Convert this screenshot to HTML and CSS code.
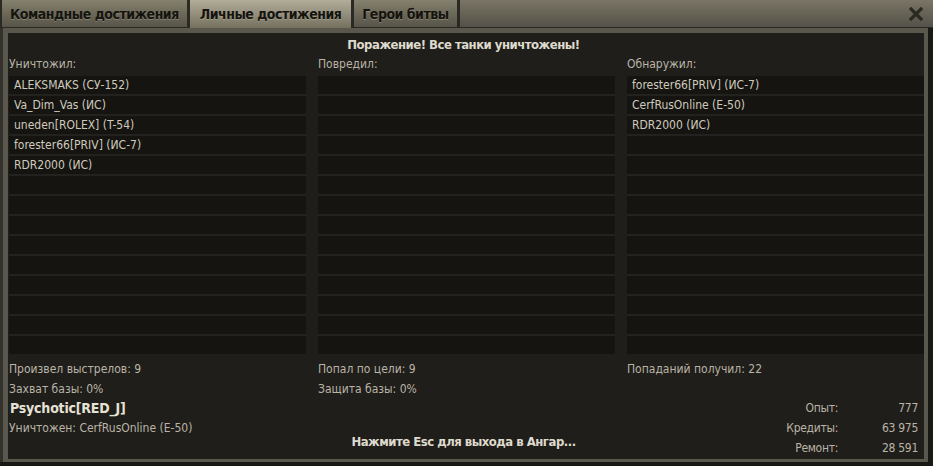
FILE: index.html
```html
<!DOCTYPE html>
<html>

<head>
  <title>Итоги боя</title>
  <link rel="stylesheet" href="styles.css">
</head>

<body>
  <div class="window">
    <div class="tab-bar">
      <div class="tab">Командные достижения</div>
      <div class="tab active">Личные достижения</div>
      <div class="tab">Герои битвы</div>
      <div class="tab-fill">
        <button type="button" class="close" title="Закрыть">
          <svg width="14" height="14" viewBox="0 0 14 14">
            <path d="M2 2 L12 12 M12 2 L2 12" stroke="#2a2924" stroke-width="3.2" stroke-linecap="square" />
          </svg>
        </button>
      </div>
    </div>

    <div class="frame">
      <div class="panel">
        <h1 class="result">Поражение! Все танки уничтожены!</h1>

        <div class="columns">
          <div class="column">
            <div class="column-title">Уничтожил:</div>
            <ul class="list">
              <li>ALEKSMAKS (СУ-152)</li>
              <li>Va_Dim_Vas (ИС)</li>
              <li>uneden[ROLEX] (T-54)</li>
              <li>forester66[PRIV] (ИС-7)</li>
              <li>RDR2000 (ИС)</li>
              <li></li>
              <li></li>
              <li></li>
              <li></li>
              <li></li>
              <li></li>
              <li></li>
              <li></li>
              <li></li>
            </ul>
            <div class="stats">
              <div>Произвел выстрелов: 9</div>
              <div>Захват базы: 0%</div>
            </div>
          </div>

          <div class="column">
            <div class="column-title">Повредил:</div>
            <ul class="list">
              <li></li>
              <li></li>
              <li></li>
              <li></li>
              <li></li>
              <li></li>
              <li></li>
              <li></li>
              <li></li>
              <li></li>
              <li></li>
              <li></li>
              <li></li>
              <li></li>
            </ul>
            <div class="stats">
              <div>Попал по цели: 9</div>
              <div>Защита базы: 0%</div>
            </div>
          </div>

          <div class="column">
            <div class="column-title">Обнаружил:</div>
            <ul class="list">
              <li>forester66[PRIV] (ИС-7)</li>
              <li>CerfRusOnline (E-50)</li>
              <li>RDR2000 (ИС)</li>
              <li></li>
              <li></li>
              <li></li>
              <li></li>
              <li></li>
              <li></li>
              <li></li>
              <li></li>
              <li></li>
              <li></li>
              <li></li>
            </ul>
            <div class="stats">
              <div>Попаданий получил: 22</div>
            </div>
          </div>
        </div>

        <div class="footer">
          <div class="player">
            <div class="player-name">Psychotic[RED_J]</div>
            <div>Уничтожен: CerfRusOnline (E-50)</div>
          </div>

          <div class="hint">Нажмите Esc для выхода в Ангар...</div>

          <div class="rewards">
            <span class="reward-label">Опыт:</span>
            <span class="reward-value">777</span>
            <span class="reward-label">Кредиты:</span>
            <span class="reward-value">63 975</span>
            <span class="reward-label">Ремонт:</span>
            <span class="reward-value">28 591</span>
          </div>
        </div>
      </div>
    </div>
  </div>
</body>

</html>
```

FILE: styles.css
```css
body {
  margin: 0;
  width: 933px;
  height: 466px;
  overflow: hidden;
  background-color: #191815;
  font-family: "DejaVu Sans Condensed", "DejaVu Sans", sans-serif;
  color: #b9b4a7;
}

.window {
  height: 462px;
  display: flex;
  flex-direction: column;
}

/* Tabs */
.tab-bar {
  height: 28px;
  display: flex;
  background-color: #2b2924;
  padding-left: 2px;
}

.tab {
  height: 27px;
  margin-right: 3px;
  padding: 0 8px;
  display: flex;
  align-items: center;
  font-size: 14px;
  font-weight: bold;
  letter-spacing: -0.5px;
  color: #15140f;
  text-shadow: 0 1px 0 rgba(200, 195, 175, 0.35);
  background: linear-gradient(to bottom, #86816e 0%, #6f6b5b 45%, #57544a 100%);
}

.tab.active {
  height: 28px;
  padding: 0 10px;
  background: linear-gradient(to bottom, #b2ad98 0%, #9a9582 40%, #75715f 100%);
}

.tab-fill {
  flex: 1;
  height: 27px;
  display: flex;
  justify-content: flex-end;
  align-items: center;
  background: linear-gradient(to bottom, #7a7565 0%, #676355 50%, #54514a 100%);
}

.close {
  margin: 0 9px 0 0;
  padding: 0;
  width: 16px;
  height: 16px;
  display: flex;
  align-items: center;
  justify-content: center;
  background: none;
  border: none;
  cursor: pointer;
}

/* Frame and panel */
.frame {
  flex: 1;
  display: flex;
  margin-right: 5px;
  padding: 5px 4px 3px 5px;
  border-left: 3px solid #34322d;
  background-color: #5a574d;
}

.panel {
  flex: 1;
  display: flex;
  flex-direction: column;
  padding: 4px 6px 0 1px;
  background-color: #201e1a;
}

.result {
  margin: 0 0 3px;
  font-size: 13px;
  line-height: 16px;
  font-weight: bold;
  letter-spacing: -0.5px;
  text-align: center;
  color: #dedacd;
}

.columns {
  display: grid;
  grid-template-columns: 297px 297px 1fr;
  gap: 12px;
  margin-right: -6px;
}

.column-title {
  font-size: 12px;
  line-height: 16px;
  margin-bottom: 4px;
}

.list {
  list-style: none;
  margin: 0;
  padding: 0;
  background-color: #151411;
}

.list li {
  height: 18px;
  line-height: 18px;
  padding-left: 5px;
  border-bottom: 2px solid #24221e;
  font-size: 12px;
  color: #cfcabd;
}

.list li:last-child {
  border-bottom: none;
}

.stats {
  padding-top: 5px;
  height: 40px;
  font-size: 12px;
  line-height: 20px;
}

.footer {
  flex: 1;
  display: grid;
  grid-template-columns: 1fr auto 1fr;
}

.player {
  font-size: 12px;
  line-height: 20px;
}

.player-name {
  padding-left: 1px;
  font-size: 14px;
  line-height: 19px;
  font-weight: bold;
  letter-spacing: -0.2px;
  color: #e6e2d6;
}

.hint {
  align-self: end;
  margin-bottom: 9px;
  font-size: 13px;
  line-height: 16px;
  font-weight: bold;
  letter-spacing: -0.5px;
  color: #dedacd;
}

.rewards {
  justify-self: end;
  display: grid;
  grid-template-columns: auto 80px;
  font-size: 12px;
  letter-spacing: -0.3px;
  line-height: 19.5px;
  text-align: right;
}
```
